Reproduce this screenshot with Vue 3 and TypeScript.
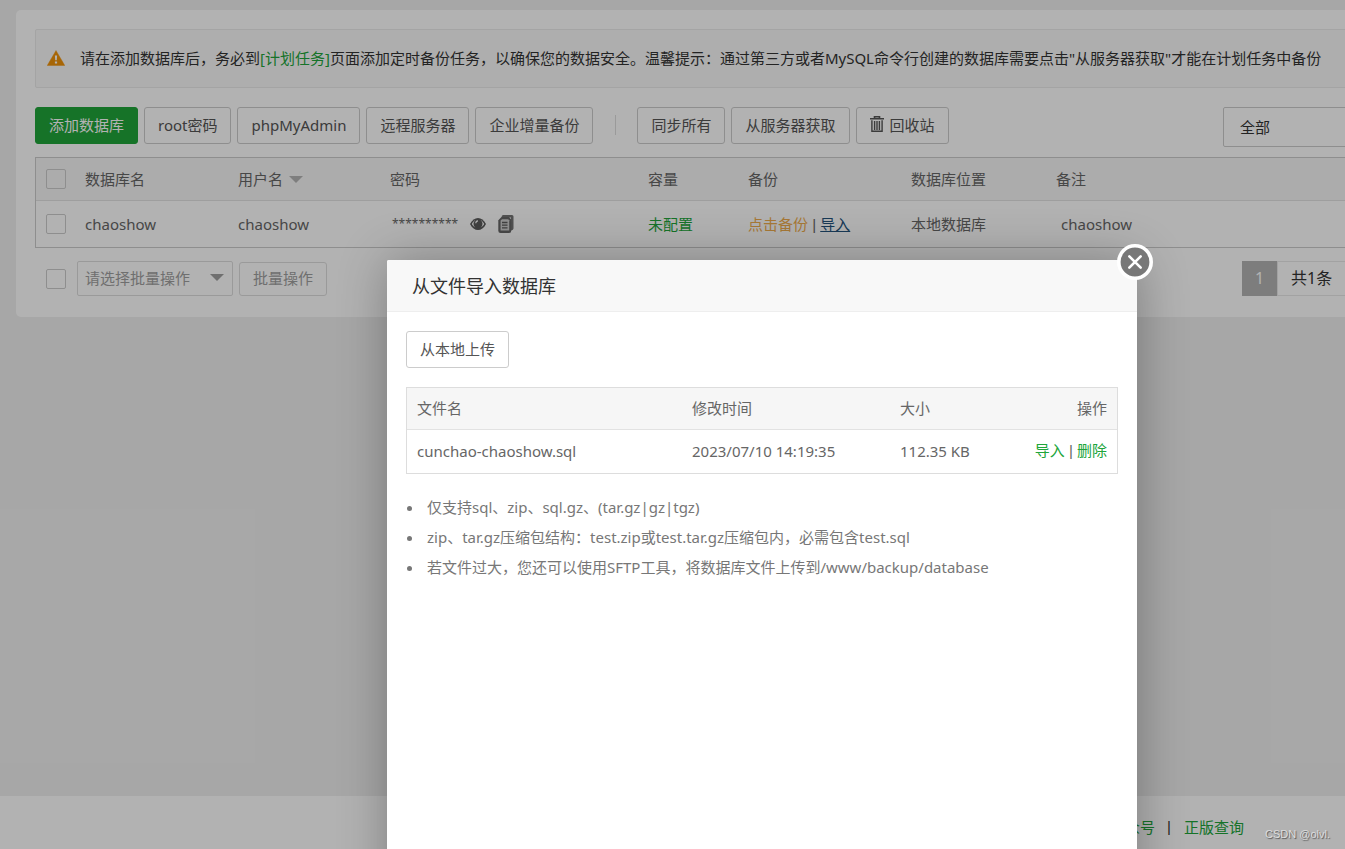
<script setup lang="ts">
import { ref } from 'vue'

interface Database {
  name: string
  user: string
  quota: string
  location: string
  note: string
}

interface BackupFile {
  name: string
  time: string
  size: string
}

const primaryTools: string[] = ['root密码', 'phpMyAdmin', '远程服务器', '企业增量备份']
const syncTools: string[] = ['同步所有', '从服务器获取']

const databases: Database[] = [
  { name: 'chaoshow', user: 'chaoshow', quota: '未配置', location: '本地数据库', note: 'chaoshow' },
]

const files: BackupFile[] = [
  { name: 'cunchao-chaoshow.sql', time: '2023/07/10 14:19:35', size: '112.35 KB' },
]

const tips: string[] = [
  '仅支持sql、zip、sql.gz、(tar.gz|gz|tgz)',
  'zip、tar.gz压缩包结构：test.zip或test.tar.gz压缩包内，必需包含test.sql',
  '若文件过大，您还可以使用SFTP工具，将数据库文件上传到/www/backup/database',
]

const dialogOpen = ref(true)
</script>

<template>
  <div class="viewport">
    <div class="surface">
      <main class="card">
        <div class="alert">
          <svg class="alert-icon" viewBox="0 0 18 16" aria-hidden="true">
            <path d="M9 .5 17.8 15.5H.2Z" fill="#f0920a" stroke="#f0920a" stroke-width=".4" stroke-linejoin="round" />
            <path d="M7.9 5.4h2.2l-.3 4.8H8.2ZM7.9 11.4h2.2v2.1H7.9Z" fill="#fff" />
          </svg>
          <p>请在添加数据库后，务必到<a href="#crontab">[计划任务]</a>页面添加定时备份任务，以确保您的数据安全。温馨提示：通过第三方或者MySQL命令行创建的数据库需要点击"从服务器获取"才能在计划任务中备份</p>
        </div>

        <div class="toolbar">
          <button class="btn primary" type="button">添加数据库</button>
          <button v-for="t in primaryTools" :key="t" class="btn" type="button">{{ t }}</button>
          <span class="divider"></span>
          <button v-for="t in syncTools" :key="t" class="btn" type="button">{{ t }}</button>
          <button class="btn" type="button">
            <svg class="trash" viewBox="0 0 14 16" aria-hidden="true">
              <path d="M0 2.800h14M4.500 2.500V.8h5v1.700" fill="none" stroke="#555" stroke-width="1.600" />
              <path d="M1.900 4.300v10.900h10.200V4.300M4.600 5v9M7 5v9M9.400 5v9" fill="none" stroke="#555" stroke-width="1.400" />
            </svg>回收站
          </button>
          <select class="filter" aria-label="数据库位置">
            <option>全部</option>
          </select>
        </div>

        <table class="grid databases">
          <colgroup>
            <col class="c-check" /><col class="c-name" /><col class="c-user" /><col class="c-pass" />
            <col class="c-quota" /><col class="c-backup" /><col class="c-place" /><col />
          </colgroup>
          <thead>
            <tr>
              <th><input type="checkbox" aria-label="全选" /></th>
              <th>数据库名</th>
              <th>用户名<i class="caret sort"></i></th>
              <th>密码</th>
              <th>容量</th>
              <th>备份</th>
              <th>数据库位置</th>
              <th>备注</th>
            </tr>
          </thead>
          <tbody>
            <tr v-for="d in databases" :key="d.name">
              <td><input type="checkbox" :aria-label="d.name" /></td>
              <td>{{ d.name }}</td>
              <td>{{ d.user }}</td>
              <td>
                <div class="password">
                  <span>**********</span>
                  <button class="icon-btn" type="button" aria-label="显示密码">
                    <svg width="16" height="12" viewBox="0 0 16 12" aria-hidden="true">
                      <path d="M0 6C2 2 5 0 8 0s6 2 8 6c-2 4-5 6-8 6S2 10 0 6Z" fill="#5c5c5c" />
                      <path d="M1.8 6C3 3.800 4.200 2.700 5.400 2a4.700 4.700 0 0 0 0 7.600C4.200 9 2.800 7.900 1.800 6ZM14.200 6c-1.200-2.200-2.400-3.300-3.600-4a4.700 4.700 0 0 1 0 7.600c1.200-.6 2.600-1.700 3.600-3.600Z" fill="#fff" />
                      <path d="M5.800 5.200A2.400 2.400 0 0 1 8 2.900" fill="none" stroke="#fff" stroke-width="1.200" />
                    </svg>
                  </button>
                  <button class="icon-btn" type="button" aria-label="复制密码">
                    <svg width="16" height="18" viewBox="0 0 16 18" aria-hidden="true">
                      <path d="M5 0h9q1.500 0 1.500 1.500v12q0 1.500-2.500 2V2.500H3.500Q3.500 0 5 0Z" fill="#747474" />
                      <path d="M3.500 2H11l2.300 2.500v11q0 2.500-2.300 2.500H2.500q-2.200 0-2.200-2.200V5.200Z" fill="#686868" />
                      <path d="M4 4.200h6.200l1 1v10.300H2.600V5.600Z" fill="#cfcfcf" />
                      <path d="M4 7.500h5.500M4 10.200h5.500M4 12.900h5.500" stroke="#5c5c5c" stroke-width="1.300" />
                    </svg>
                  </button>
                </div>
              </td>
              <td><a href="#quota">{{ d.quota }}</a></td>
              <td><a class="warn" href="#backup">点击备份</a><span class="sep">&nbsp;|&nbsp;</span><a class="active" href="#import">导入</a></td>
              <td>{{ d.location }}</td>
              <td class="note">{{ d.note }}</td>
            </tr>
          </tbody>
        </table>

        <div class="batch">
          <input type="checkbox" aria-label="选择全部数据库" />
          <div class="batch-select">
            <select aria-label="批量操作类型">
              <option>请选择批量操作</option>
            </select>
            <i class="caret"></i>
          </div>
          <button class="btn muted" type="button">批量操作</button>
          <div class="pager">
            <span class="current">1</span>
            <span class="total">共1条</span>
          </div>
        </div>
      </main>

      <footer class="footer">
        <a href="#wechat">公众号</a><span>|</span><a href="#license">正版查询</a>
      </footer>

      <div class="mask"></div>

      <section v-if="dialogOpen" class="dialog" role="dialog" aria-labelledby="dialog-title">
        <h2 id="dialog-title">从文件导入数据库</h2>
        <button class="close" type="button" aria-label="关闭" @click="dialogOpen = false">
          <svg width="36" height="36" viewBox="0 0 36 36" aria-hidden="true">
            <circle cx="18" cy="18" r="16.200" fill="#787878" stroke="#fff" stroke-width="3.600" />
            <path d="m12.300 12.300 11.400 11.400M23.700 12.300 12.300 23.700" stroke="#fff" stroke-width="2.600" stroke-linecap="round" />
          </svg>
        </button>
        <div class="dialog-body">
          <button class="btn" type="button">从本地上传</button>
          <table class="grid files">
            <colgroup>
              <col class="f-name" /><col class="f-time" /><col class="f-size" /><col />
            </colgroup>
            <thead>
              <tr>
                <th>文件名</th>
                <th>修改时间</th>
                <th>大小</th>
                <th class="right">操作</th>
              </tr>
            </thead>
            <tbody>
              <tr v-for="f in files" :key="f.name">
                <td>{{ f.name }}</td>
                <td>{{ f.time }}</td>
                <td>{{ f.size }}</td>
                <td class="right"><a href="#import-file">导入</a><span class="sep">&nbsp;|&nbsp;</span><a href="#delete-file">删除</a></td>
              </tr>
            </tbody>
          </table>
          <ul class="tips">
            <li v-for="t in tips" :key="t">{{ t }}</li>
          </ul>
        </div>
      </section>
    </div>
    <span class="watermark">CSDN @olvl.</span>
  </div>
</template>

<style>
body {
  margin: 0;
  background: #f0f0f0;
}
</style>

<style scoped>
.viewport {
  position: relative;
  height: 100vh;
  overflow: hidden;
  font: 15px/20px "Noto Sans", "Noto Sans CJK SC", sans-serif;
  color: #666;
}
.viewport *,
.viewport *::before {
  box-sizing: border-box;
}
.surface {
  position: relative;
  display: flex;
  flex-direction: column;
  width: calc(100% + 179px);
  height: 100%;
  background: #f0f0f0;
}
button,
select {
  font: inherit;
}
a {
  color: #20a53a;
  text-decoration: none;
}
.card {
  margin: 10px 16px 0;
  padding: 19px 19px 21px;
  background: #fff;
  border-radius: 5px;
}
.alert {
  display: flex;
  align-items: center;
  gap: 15px;
  height: 59px;
  padding: 0 11px 2px;
  border: 1px solid #ebebeb;
  border-radius: 2px;
  background: #fafafa;
  color: #333;
  white-space: nowrap;
}
.alert p {
  margin: 0;
}
.alert-icon {
  width: 18px;
  height: 16px;
}
.toolbar {
  display: flex;
  align-items: flex-start;
  gap: 6px;
  margin: 19px 0 10px;
}
.btn {
  height: 37px;
  padding: 0 13px 2px;
  border: 1px solid #ccc;
  border-radius: 3px;
  background: #fff;
  color: #555;
  white-space: nowrap;
}
.btn.primary {
  border-color: #20a53a;
  background: #20a53a;
  color: #fff;
}
.btn.muted {
  height: 34px;
  border-color: #ddd;
  color: #a0a0a0;
}
.divider {
  width: 1px;
  height: 20px;
  margin: 8px 15px 0 16px;
  background: #ddd;
}
.trash {
  width: 14px;
  height: 16px;
  margin-right: 6px;
  vertical-align: -1px;
}
.filter {
  appearance: none;
  width: 266px;
  height: 40px;
  margin-left: auto;
  padding: 0 16px;
  border: 1px solid #ccc;
  border-radius: 2px;
  background: #fff;
  color: #333;
}
.grid {
  width: 100%;
  border: 1px solid #ddd;
  border-spacing: 0;
  table-layout: fixed;
}
.grid th,
.grid td {
  padding: 0 10px;
  font-weight: 400;
  text-align: left;
  white-space: nowrap;
}
.grid th {
  height: 43px;
  border-bottom: 1px solid #e2e2e2;
  background: #f6f6f6;
}
.grid td {
  height: 46px;
}
.grid .right {
  text-align: right;
}
.databases {
  border-color: #ccc;
}
.c-check { width: 39px; }
.c-name { width: 153px; }
.c-user { width: 152px; }
.c-pass { width: 258px; }
.c-quota { width: 100px; }
.c-backup { width: 163px; }
.c-place { width: 145px; }
.grid .note {
  padding-left: 15px;
}
.sep {
  font-family: "Liberation Sans", sans-serif;
}
.warn {
  color: #f0ad4e;
}
.active {
  color: #23527c;
  text-decoration: underline;
}
input[type="checkbox"] {
  appearance: none;
  display: block;
  flex: none;
  width: 20px;
  height: 20px;
  margin: 0;
  border: 1px solid #ccc;
  border-radius: 2px;
  background: transparent;
}
.caret {
  display: inline-block;
  border: 7px solid transparent;
  border-top-color: #a0a0a0;
  border-bottom: 0;
}
.sort {
  margin-left: 6px;
  border-top-color: #b5b5b5;
  vertical-align: 2px;
}
.password {
  display: flex;
  align-items: center;
  gap: 12px;
  padding-left: 2px;
}
.password span {
  font-size: 12px;
}
.icon-btn {
  display: flex;
  padding: 0;
  border: 0;
  background: none;
}
.batch {
  display: flex;
  align-items: center;
  gap: 6px;
  margin-top: 13px;
  padding-left: 11px;
}
.batch-select {
  display: flex;
  align-items: center;
  width: 156px;
  height: 35px;
  margin-left: 5px;
  padding: 0 8px 2px 7px;
  border: 1px solid #ddd;
  border-radius: 2px;
}
.batch-select select {
  appearance: none;
  flex: 1;
  min-width: 0;
  padding: 0;
  border: 0;
  background: none;
  color: #a0a0a0;
}
.pager {
  display: flex;
  width: 247px;
  height: 35px;
  margin-left: auto;
  font-size: 16px;
  line-height: 35px;
  color: #333;
}
.current {
  width: 35px;
  background: #b3b3b3;
  color: #fff;
  text-align: center;
}
.total {
  flex: 1;
  padding-left: 13px;
  border: 1px solid #e8e8e8;
  line-height: 33px;
}
.footer {
  display: flex;
  justify-content: flex-end;
  align-items: center;
  gap: 12px;
  height: 53px;
  margin-top: auto;
  padding: 8px 280px 0 0;
  background: #fff;
  color: #333;
}
.footer span {
  width: 5px;
  font-family: "Liberation Sans", sans-serif;
}
.mask {
  position: absolute;
  inset: 0;
  background: rgba(0, 0, 0, 0.3);
}
.dialog {
  position: absolute;
  top: 260px;
  left: 50%;
  width: 750px;
  height: 700px;
  margin-left: -375px;
  border-radius: 2px;
  background: #fff;
  box-shadow: 1px 1px 50px rgba(0, 0, 0, 0.3);
}
.dialog h2 {
  height: 52px;
  margin: 0;
  padding: 0 25px;
  border-bottom: 1px solid #eee;
  border-radius: 2px 2px 0 0;
  background: #f8f8f8;
  color: #333;
  font-size: 18px;
  font-weight: 400;
  line-height: 52px;
}
.close {
  position: absolute;
  top: -16px;
  right: -16px;
  display: flex;
  padding: 0;
  border: 0;
  border-radius: 50%;
  background: none;
}
.dialog-body {
  padding: 19px;
}
.files {
  margin-top: 19px;
}
.files th {
  height: 42px;
  padding-bottom: 2px;
}
.files td {
  height: 43px;
  padding-bottom: 2px;
}
.f-name { width: 275px; }
.f-time { width: 208px; }
.f-size { width: 120px; }
.tips {
  margin: 18px 0 0;
  padding-left: 18px;
  color: #777;
  line-height: 30px;
}
.tips li {
  padding-left: 3px;
}
.watermark {
  position: absolute;
  right: 15px;
  bottom: 8px;
  color: #ddd;
  font: 11px/14px "Liberation Sans", sans-serif;
  text-shadow: 1px 1px 1px #555;
}
</style>
